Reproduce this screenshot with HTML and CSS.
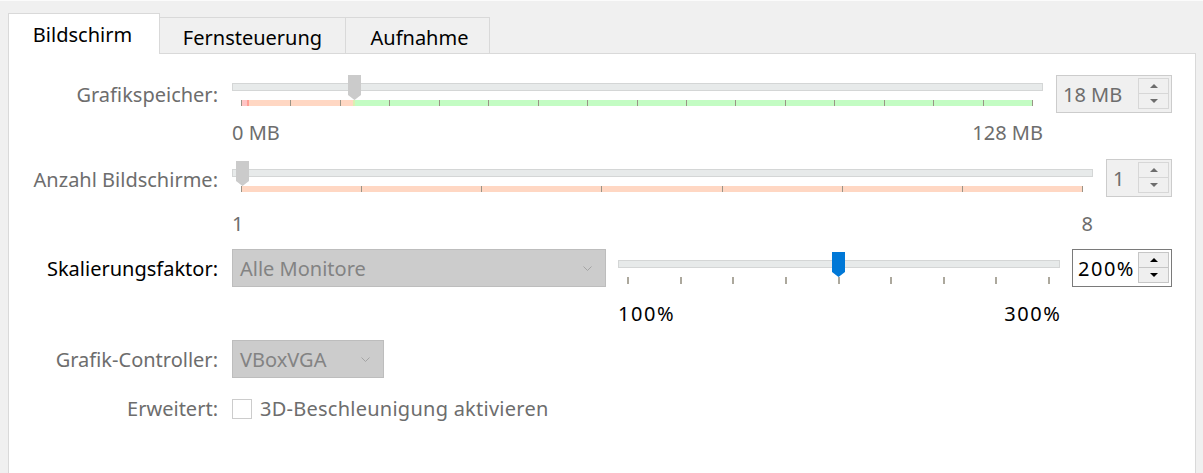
FILE: index.html
```html
<!DOCTYPE html>
<html lang="de">
<head>
<meta charset="utf-8">
<title>Anzeige</title>
<link rel="stylesheet" href="styles.css">
</head>
<body>
<div class="window">
  <div class="tabs">
    <div class="tab active tab-screen">Bildschirm</div>
    <div class="tab tab-remote">Fernsteuerung</div>
    <div class="tab tab-rec">Aufnahme</div>
  </div>
  <div class="panel">
    <div class="row row-mem">
      <div class="label muted lbl-a">Grafikspeicher:</div>
      <div class="slider slider-mem">
        <div class="handle" style="left:116px"></div>
        <div class="groove groove-a"></div>
        <div class="bar bar-mem"><i></i><i></i><i></i><i></i><i></i><i></i><i></i><i></i><i></i><i></i><i></i><i></i><i></i><i></i><i></i><i></i><i></i></div>
        <div class="scale muted scale-a"><span>0 MB</span><span>128 MB</span></div>
      </div>
      <div class="spin disabled spin-mem"><span class="val">18 MB</span><div class="btns"><b class="up"></b><b class="down"></b></div></div>
    </div>

    <div class="row row-mon">
      <div class="label muted lbl-b">Anzahl Bildschirme:</div>
      <div class="slider slider-mon">
        <div class="handle handle-b" style="left:4px"></div>
        <div class="groove groove-b"></div>
        <div class="bar bar-mon"><i></i><i></i><i></i><i></i><i></i><i></i><i></i><i></i></div>
        <div class="scale muted scale-b"><span>1</span><span>8</span></div>
      </div>
      <div class="spin disabled spin-mon"><span class="val">1</span><div class="btns"><b class="up"></b><b class="down"></b></div></div>
    </div>

    <div class="row row-scale">
      <div class="label lbl-a dark">Skalierungsfaktor:</div>
      <div class="combo combo-mon"><span>Alle Monitore</span><svg width="9" height="5" viewBox="0 0 9 5"><path d="M0.5 0.5 L4.5 4.5 L8.5 0.5" fill="none" stroke="#a4a4a4" stroke-width="1"/></svg></div>
      <div class="slider slider-scale">
        <div class="handle handle-c blue" style="left:214px"></div>
        <div class="groove groove-c"></div>
        <div class="ticks"><i></i><i></i><i></i><i></i><i></i><i></i><i></i><i></i><i></i></div>
        <div class="scale scale-c"><span>100%</span><span>300%</span></div>
      </div>
      <div class="spin enabled spin-scale"><span class="val pct">200%</span><div class="btns"><b class="up"></b><b class="down"></b></div></div>
    </div>

    <div class="row row-ctrl">
      <div class="label muted lbl-a">Grafik-Controller:</div>
      <div class="combo combo-ctrl"><span>VBoxVGA</span><svg width="9" height="5" viewBox="0 0 9 5"><path d="M0.5 0.5 L4.5 4.5 L8.5 0.5" fill="none" stroke="#a4a4a4" stroke-width="1"/></svg></div>
    </div>

    <div class="row row-adv">
      <div class="label muted">Erweitert:</div>
      <div class="check"></div>
      <div class="check-text muted">3D-Beschleunigung aktivieren</div>
    </div>
  </div>
</div>
</body>
</html>
```

FILE: styles.css
```css
* { box-sizing: border-box; }

html, body {
  margin: 0;
  height: 473px;
  overflow: hidden;
}

body {
  background: #f0f0f0;
  font-family: "Noto Sans", "Open Sans", sans-serif;
  font-size: 20px;
  line-height: 27px;
  color: #000;
}

.window {
  border-top: 1px solid #fbfbfb;
  padding: 12px 7px 0 8px;
}

/* Tabs */
.tabs {
  display: flex;
  align-items: flex-end;
  height: 40px;
}

.tab {
  height: 36px;
  border: 1px solid #d9d9d9;
  border-bottom: 0;
  background: #f0f0f0;
  padding-top: 6px;
  text-align: center;
  margin-left: -1px;
  white-space: nowrap;
}

.tab.active {
  height: 41px;
  margin-left: 0;
  margin-bottom: -1px;
  padding-top: 7px;
  padding-right: 3px;
  background: #fff;
  position: relative;
  z-index: 1;
}

.tab-screen { width: 152px; }
.tab-remote { width: 187px; }
.tab-rec { width: 145px; padding-left: 4px; }

/* Panel */
.panel {
  background: #fff;
  border: 1px solid #d9d9d9;
  height: 440px;
  padding-top: 21px;
}

.row {
  display: flex;
  align-items: flex-start;
}

.label {
  flex: none;
  width: 223px;
  padding-right: 14px;
  text-align: right;
  white-space: nowrap;
}

.muted { color: #6d6d6d; }
.dark { color: #000; }

.lbl-a { margin-top: 6px; }
.lbl-b { margin-top: 7px; }

.row-mon { margin-top: 13px; }
.row-scale { margin-top: 12px; }
.row-ctrl { margin-top: 13px; }
.row-adv { margin-top: 17px; align-items: center; }

/* Slider */
.slider {
  position: relative;
  flex: none;
}

.slider-mem { width: 811px; margin-right: 13px; }
.slider-mon { width: 861px; margin-right: 13px; }
.slider-scale { width: 442px; margin-right: 12px; }

.handle {
  position: absolute;
  top: 0;
  width: 13px;
  height: 25px;
  background: #cbcbcb;
  clip-path: polygon(0 0, 100% 0, 100% 80%, 50% 100%, 0 80%);
}
.handle-b { top: 2px; }
.handle-c { top: 3px; }
.handle.blue { background: #0078d7; }

.groove {
  height: 8px;
  border: 1px solid #d4d6d6;
  background: #e7eaea;
}
.groove-a { margin-top: 8px; }
.groove-b { margin-top: 10px; }
.groove-c { margin-top: 11px; }

.bar {
  display: flex;
  justify-content: space-between;
  height: 6px;
  margin: 9px 10px 0 9px;
}
.bar i {
  width: 1px;
  background: #9a9486;
}
.bar-mem {
  background: linear-gradient(to right,
    #ffc5c5 0, #ffc5c5 6px,
    #ff9f95 6px, #ff9f95 8px,
    #ffd7c3 8px, #ffd7c3 112px,
    #dcefb2 112px, #dcefb2 114px,
    #c3fcc3 114px, #c3fcc3 100%);
}
.bar-mon { background: #ffd7c3; }

.ticks {
  display: flex;
  justify-content: space-between;
  height: 7px;
  margin: 9px 10px 0 9px;
}
.ticks i {
  width: 2px;
  background: #aca89d;
}

.scale {
  display: flex;
  justify-content: space-between;
  white-space: nowrap;
}
.scale-a { margin-top: 13px; }
.scale-b { margin-top: 18px; }
.scale-c { margin-top: 16px; letter-spacing: 1.6px; }
.scale-c span:last-child { margin-right: -1.6px; }

/* Spin boxes */
.spin {
  flex: none;
  display: flex;
  height: 38px;
  border: 1px solid #cccccc;
  background: #f0f0f0;
}
.spin .val {
  flex: 1;
  align-self: center;
  padding-left: 6px;
  padding-top: 1px;
  white-space: nowrap;
}
.spin .val.pct { letter-spacing: 1.5px; }
.spin .btns {
  display: flex;
  flex-direction: column;
  width: 31px;
  margin: 2px 2px 3px 0;
}
.spin .btns b {
  flex: 1;
  display: flex;
  align-items: center;
  justify-content: center;
  border: 1px solid #d7d7d7;
  background: #f0f0f0;
}
.spin .btns b + b { margin-top: -1px; }
.spin .up::after {
  content: "";
  border-left: 4.5px solid transparent;
  border-right: 4.5px solid transparent;
  border-bottom: 4px solid #6d6d6d;
}
.spin .down::after {
  content: "";
  border-left: 4.5px solid transparent;
  border-right: 4.5px solid transparent;
  border-top: 4px solid #6d6d6d;
}

.spin.disabled .val { color: #6d6d6d; }

.spin.enabled {
  border-color: #7a7a7a;
  background: #fff;
}
.spin.enabled .val { padding-left: 5px; color: #000; }
.spin.enabled .btns b {
  border-color: #c6c6c6;
  background: #efefef;
}
.spin.enabled .up::after { border-bottom-color: #000; }
.spin.enabled .down::after { border-top-color: #000; }

.spin-mem { width: 116px; }
.spin-mon { width: 66px; }
.spin-scale { width: 100px; }

/* Combo boxes */
.combo {
  flex: none;
  display: flex;
  align-items: center;
  height: 38px;
  border: 1px solid #bdbdbd;
  background: #cccccc;
  color: #838383;
  padding-left: 7px;
  padding-top: 1px;
}
.combo span { flex: 1; white-space: nowrap; }
.combo svg { flex: none; margin-right: 13px; }
.combo-mon { width: 374px; margin-right: 12px; }
.combo-ctrl { width: 152px; }

/* Checkbox */
.check {
  flex: none;
  width: 20px;
  height: 20px;
  border: 1px solid #cccccc;
  background: #fff;
}
.check-text {
  margin-left: 8px;
  letter-spacing: 0.25px;
  white-space: nowrap;
}
```
